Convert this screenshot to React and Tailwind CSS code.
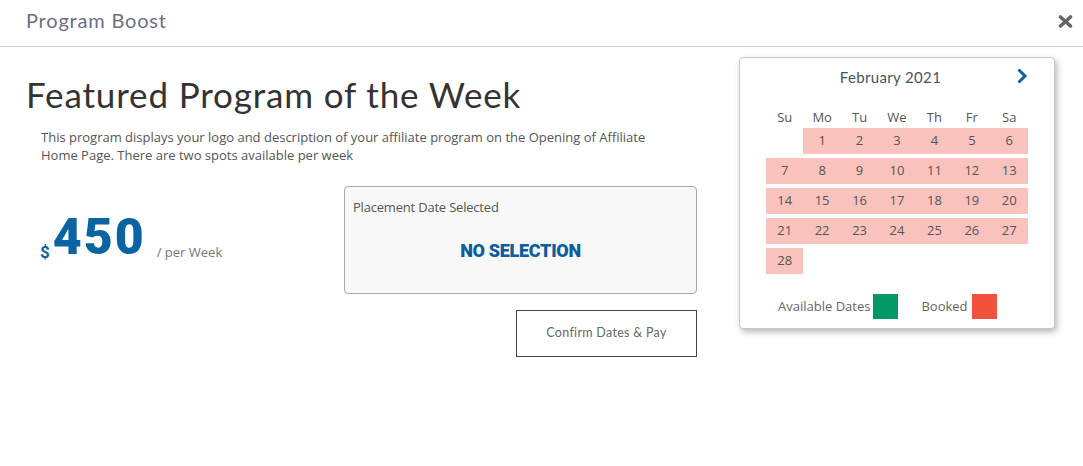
import React from "react";

const days = ["Su", "Mo", "Tu", "We", "Th", "Fr", "Sa"];

function Calendar() {
  const cells = [null];
  for (let i = 1; i <= 28; i++) cells.push(i);
  return (
    <div className="w-[316px] h-[272px] border border-[#c8c8c8] rounded-[4px] bg-white shadow-[2px_3px_6px_rgba(0,0,0,0.28)] px-[26px] pt-[8px] flex flex-col">
      <div className="flex items-center h-[22px]">
        <div className="flex-1 text-center text-[15px] text-[#4a5262] font-['Lato',sans-serif] tracking-[0.35px]">February 2021</div>
        <svg width="12" height="16" viewBox="0 0 12 16" className="mb-[3px] ml-[1px]">
          <path d="M2.5 1.5 L9 8 L2.5 14.5" fill="none" stroke="#0a64a4" strokeWidth="3" />
        </svg>
      </div>
      <div className="grid grid-cols-7 mt-[20px] h-[20px] items-center text-[13px] text-[#555] font-['Open_Sans',sans-serif]">
        {days.map((d) => (
          <div key={d} className="text-center">{d}</div>
        ))}
      </div>
      <div className="grid grid-cols-7 gap-y-[4px] text-[13px] text-[#555] font-['Open_Sans',sans-serif]">
        {cells.map((c, i) =>
          c === null ? (
            <div key={i} className="h-[26px]" />
          ) : (
            <div key={i} className="h-[26px] bg-[#f9c2bc] flex items-center justify-center">{c}</div>
          )
        )}
      </div>
      <div className="flex items-center mt-[20px] pl-[12px] text-[13px] text-[#666] font-['Open_Sans',sans-serif]">
        <span>Available Dates</span>
        <span className="w-[25px] h-[25px] bg-[#009868] ml-[3px]" />
        <span className="ml-[23px]">Booked</span>
        <span className="w-[25px] h-[25px] bg-[#f2513b] ml-[4px]" />
      </div>
    </div>
  );
}

export default function App() {
  return (
    <div className="w-[1083px] h-[466px] bg-white overflow-hidden">
      <div className="h-[47px] border-b border-[#cccccc] flex items-center justify-between pl-[26px] pr-[10px]">
        <div className="text-[20px] text-[#6e6e86] font-['Lato',sans-serif] tracking-[0.8px] pb-[6px]">Program Boost</div>
        <svg width="15" height="13" viewBox="0 0 15 13" className="mb-[4px]">
          <path d="M2.5 2 L12.5 11 M12.5 2 L2.5 11" stroke="#666" strokeWidth="3.6" strokeLinecap="round" />
        </svg>
      </div>
      <div className="flex">
        <div className="w-[697px] pl-[26px]">
          <h1 className="mt-[26px] text-[35px] leading-[42px] text-[#333] font-['Lato',sans-serif] tracking-[0.85px]">Featured Program of the Week</h1>
          <p className="mt-[13px] pl-[15px] w-[640px] text-[13px] leading-[18px] text-[#555] font-['Open_Sans',sans-serif]">
            This program displays your logo and description of your affiliate program on the Opening of Affiliate Home Page. There are two spots available per week
          </p>
          <div className="flex mt-[22px]">
            <div className="w-[318px] flex items-end pl-[14px] pb-[32px]">
              <span className="text-[17px] font-bold text-[#0a63a3] font-['Roboto',sans-serif] leading-none mb-[1px]">$</span>
              <span className="text-[50px] font-black text-[#0a63a3] font-['Roboto',sans-serif] leading-none tracking-[2px] ml-[3px]">450</span>
              <span className="text-[13px] text-[#777] font-['Open_Sans',sans-serif] ml-[11px] mb-[0px]">/ per Week</span>
            </div>
            <div className="w-[353px] h-[108px] border border-[#aaaaaa] rounded-[4px] bg-[#f8f8f8] px-[8px] pt-[11px]">
              <div className="text-[13px] text-[#555] font-['Open_Sans',sans-serif] tracking-[-0.2px]">Placement Date Selected</div>
              <div className="mt-[19px] text-center text-[18px] font-black text-[#0b5d9c] font-['Roboto',sans-serif] tracking-[-0.3px]">NO SELECTION</div>
            </div>
          </div>
          <div className="flex justify-end mt-[16px]">
            <div className="w-[181px] h-[47px] border border-[#444] flex items-center justify-center text-[12.5px] text-[#666] font-['Lato',sans-serif] tracking-[0.3px]">
              Confirm Dates &amp; Pay
            </div>
          </div>
        </div>
        <div className="ml-[42px] mt-[10px]">
          <Calendar />
        </div>
      </div>
    </div>
  );
}
